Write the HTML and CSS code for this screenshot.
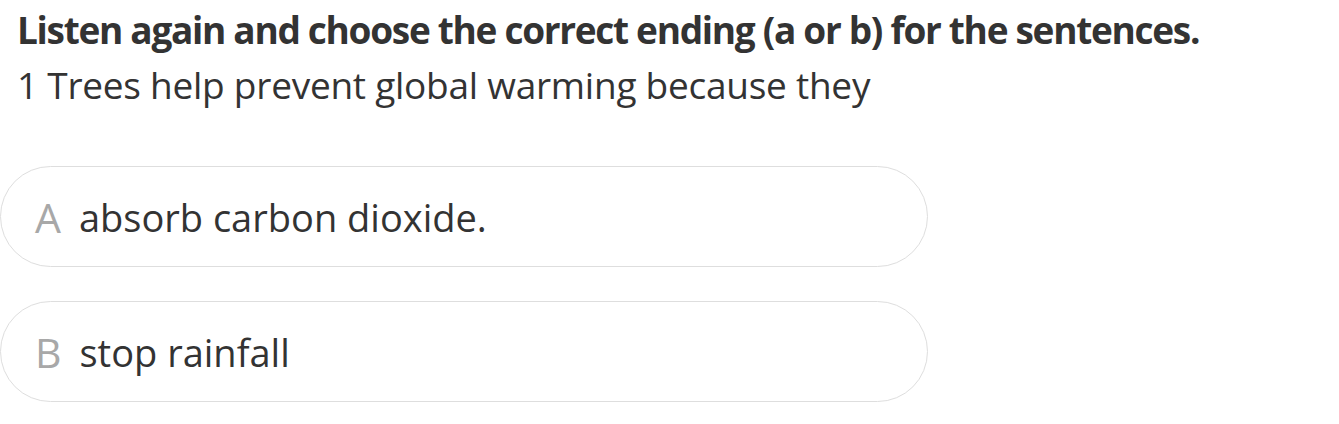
FILE: index.html
```html
<!DOCTYPE html>
<html lang="en">
<head>
<meta charset="utf-8">
<link rel="stylesheet" href="styles.css">
<title>Question</title>
</head>
<body>
<div class="page">
  <div class="title">Listen again and choose the correct ending (a or b) for the sentences.</div>
  <div class="question">1 Trees help prevent global warming because they</div>
  <div class="options">
    <div class="option"><span class="letter">A</span><span class="text">absorb carbon dioxide.</span></div>
    <div class="option"><span class="letter">B</span><span class="text">stop rainfall</span></div>
  </div>
</div>
</body>
</html>
```
FILE: styles.css
```css
html, body {
  margin: 0;
  padding: 0;
  background: #ffffff;
}
.page {
  font-family: "Open Sans", "Noto Sans", sans-serif;
  color: #333333;
  padding: 2px 0 0 0;
}
.title {
  padding-left: 17px;
  font-size: 37px;
  font-weight: 700;
  letter-spacing: -1.3px;
  line-height: 55px;
  white-space: nowrap;
}
.question {
  padding-left: 17px;
  font-size: 37px;
  letter-spacing: -0.25px;
  line-height: 55px;
  white-space: nowrap;
}
.options {
  display: flex;
  flex-direction: column;
  gap: 34px;
  margin-top: 54px;
}
.option {
  box-sizing: border-box;
  width: 928px;
  height: 101px;
  border: 1.5px solid #dedede;
  border-radius: 51px;
  display: flex;
  align-items: center;
  padding-left: 34px;
  gap: 18px;
}
.letter {
  color: #a8a8a8;
  font-size: 41px;
}
.text {
  font-size: 38px;
}
```
